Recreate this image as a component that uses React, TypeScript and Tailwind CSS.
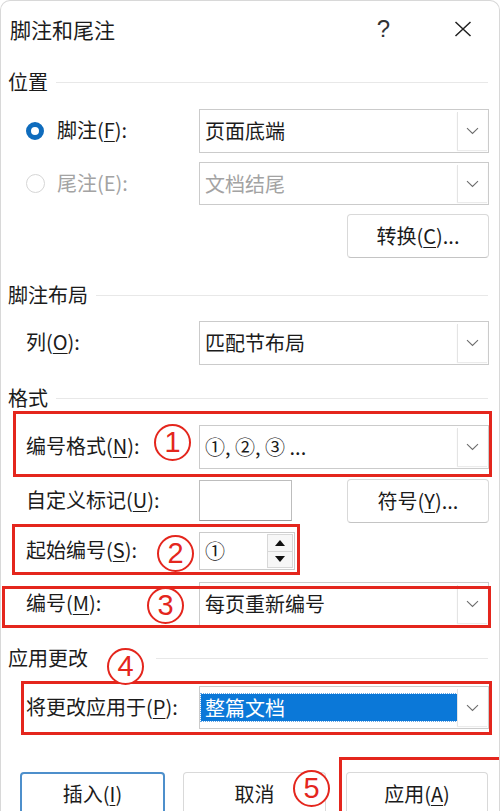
import React from 'react';

type LabelProps = { pre: string; hot: string; post?: string; muted?: boolean };

function Label({ pre, hot, post = '):', muted }: LabelProps) {
  return (
    <span className={`whitespace-nowrap text-[20px] leading-none ${muted ? 'text-[#a3a3a3]' : 'text-[#1b1b1b]'}`}>
      {pre}(<span className="underline decoration-1 underline-offset-[3px]">{hot}</span>{post}
    </span>
  );
}

function Chevron() {
  return (
    <svg width="13" height="8" viewBox="0 0 13 8" fill="none">
      <path d="M1 1.2l5.5 5.3 5.5-5.3" stroke="#6e6e6e" strokeWidth="1.1" />
    </svg>
  );
}

function Select({ value, muted, selected, h }: { value: string; muted?: boolean; selected?: boolean; h: string }) {
  return (
    <div className={`flex w-[290px] ${h} items-stretch border border-[#cbcbcb] bg-white`}>
      <div className="flex flex-1 items-center pl-[1px]">
        {selected ? (
          <span className="flex h-[27px] w-full items-center bg-[#0b78d8] pl-[4px] text-[20px] leading-none text-white outline-1 outline-dotted outline-[#6aa8e4]">
            {value}
          </span>
        ) : (
          <span className={`pl-[4px] text-[20px] leading-none ${muted ? 'text-[#a3a3a3]' : 'text-[#1b1b1b]'}`}>{value}</span>
        )}
      </div>
      <div className="my-[2px] mr-[1px] flex w-[30px] items-center justify-center border-l border-[#e4e4e4] shadow-[0_1px_1px_rgba(0,0,0,0.08)]">
        <Chevron />
      </div>
    </div>
  );
}

function Heading({ text, line = 'ml-[8px]' }: { text: string; line?: string }) {
  return (
    <div className="flex h-[28px] items-center pl-[7px] pr-[11px]">
      <span className="whitespace-nowrap text-[20px] leading-none text-[#1b1b1b]">{text}</span>
      <div className={`h-px flex-1 bg-[#e8e8e8] ${line}`} />
    </div>
  );
}

function Button({ children, width, primary }: { children: React.ReactNode; width: string; primary?: boolean }) {
  return (
    <div
      className={`flex h-[44px] ${width} items-center justify-center rounded-[4px] bg-white text-[20px] leading-none text-[#1b1b1b] ${
        primary ? 'border-2 border-[#4d8fcb]' : 'border border-[#d9d9d9] border-b-[#c4c4c4]'
      }`}
    >
      {children}
    </div>
  );
}

function Circled({ n, className }: { n: string; className: string }) {
  return (
    <div
      className={`absolute flex h-[37px] w-[37px] items-center justify-center rounded-full border-[2.5px] border-[#e4261d] bg-white font-['Liberation_Sans',sans-serif] text-[29px] leading-none text-[#e4261d] ${className}`}
    >
      <span className="-mt-[1px]">{n}</span>
    </div>
  );
}

function Radio({ checked }: { checked?: boolean }) {
  return checked ? (
    <div className="h-[18px] w-[18px] rounded-full border-[5px] border-[#0f6cbd] bg-white" />
  ) : (
    <div className="h-[19px] w-[19px] rounded-full border border-[#d6d6d6] bg-white" />
  );
}

export default function App() {
  return (
    <div className="relative h-[811px] w-[500px] overflow-hidden rounded-t-[10px] border border-b-0 border-[#d8d8d8] bg-white font-['Noto_Sans_CJK_SC',sans-serif] text-[#1b1b1b]">
      {/* title bar */}
      <div className="flex h-[56px] items-center pl-[9px]">
        <span className="flex-1 text-[21px] leading-none">脚注和尾注</span>
        <span className="mr-[64px] font-['Liberation_Sans',sans-serif] text-[24px] font-light leading-none text-[#333]">?</span>
        <svg className="mr-[27px]" width="18" height="16" viewBox="0 0 18 16">
          <path d="M1.5 1l15 14M16.5 1l-15 14" stroke="#222" strokeWidth="1.5" />
        </svg>
      </div>

      <div className="mt-[11px]">
        <Heading text="位置" />
      </div>

      <div className="mt-[13px] flex h-[44px] items-center">
        <div className="flex w-[198px] items-center pl-[25px]">
          <Radio checked />
          <span className="ml-[13px]">
            <Label pre="脚注" hot="F" />
          </span>
        </div>
        <Select value="页面底端" h="h-[44px]" />
      </div>

      <div className="mt-[9px] flex h-[43px] items-center">
        <div className="flex w-[198px] items-center pl-[25px]">
          <Radio />
          <span className="ml-[12px]">
            <span className="whitespace-nowrap text-[20px] leading-none text-[#a3a3a3]">尾注(E):</span>
          </span>
        </div>
        <Select value="文档结尾" muted h="h-[43px]" />
      </div>

      <div className="mt-[9px] flex justify-end pr-[10px]">
        <Button width="w-[142px]">
          <Label pre="转换" hot="C" post=")..." />
        </Button>
      </div>

      <div className="mt-[23px]">
        <Heading text="脚注布局" />
      </div>

      <div className="mt-[12px] flex h-[44px] items-center">
        <div className="w-[198px] pl-[25px]">
          <Label pre="列" hot="O" />
        </div>
        <Select value="匹配节布局" h="h-[44px]" />
      </div>

      <div className="mt-[19px]">
        <Heading text="格式" />
      </div>

      <div className="mt-[13px] flex h-[44px] items-center">
        <div className="w-[198px] pl-[25px]">
          <Label pre="编号格式" hot="N" />
        </div>
        <Select value="①, ②, ③ ..." h="h-[44px]" />
      </div>

      <div className="mt-[11px] flex h-[42px] items-center">
        <div className="w-[198px] pl-[25px]">
          <Label pre="自定义标记" hot="U" />
        </div>
        <div className="h-[41px] w-[93px] self-start border border-[#bdbdbd] border-b-[#9a9a9a] bg-white" />
        <div className="ml-auto mr-[10px]">
          <Button width="w-[142px]">
            <Label pre="符号" hot="Y" post=")..." />
          </Button>
        </div>
      </div>

      <div className="mt-[10px] flex h-[38px] items-center">
        <div className="w-[198px] pl-[25px]">
          <Label pre="起始编号" hot="S" />
        </div>
        <div className="flex h-[38px] w-[96px] items-stretch border border-[#cbcbcb] bg-white">
          <span className="flex flex-1 items-center pl-[5px] text-[20px] leading-none">①</span>
          <div className="my-[1px] mr-[1px] flex w-[26px] flex-col border border-[#d8d8d8]">
            <div className="flex flex-1 items-center justify-center border-b border-[#d8d8d8] bg-[#f7f7f7]">
              <svg width="10" height="6" viewBox="0 0 10 6">
                <path d="M5 0L10 6H0z" fill="#111" />
              </svg>
            </div>
            <div className="flex flex-1 items-center justify-center bg-[#f7f7f7]">
              <svg width="10" height="6" viewBox="0 0 10 6">
                <path d="M0 0h10L5 6z" fill="#111" />
              </svg>
            </div>
          </div>
        </div>
      </div>

      <div className="mt-[12px] flex h-[44px] items-center">
        <div className="w-[198px] pl-[25px]">
          <Label pre="编号" hot="M" />
        </div>
        <Select value="每页重新编号" h="h-[44px]" />
      </div>

      <div className="mt-[18px]">
        <Heading text="应用更改" line="ml-[68px]" />
      </div>

      <div className="mt-[14px] flex h-[43px] items-center">
        <div className="w-[198px] pl-[25px]">
          <Label pre="将更改应用于" hot="P" />
        </div>
        <Select value="整篇文档" selected h="h-[43px]" />
      </div>

      <div className="mt-[43px] flex items-center pl-[19px]">
        <Button width="w-[145px]" primary>
          <Label pre="插入" hot="I" post=")" />
        </Button>
        <div className="ml-[18px]">
          <Button width="w-[143px]">取消</Button>
        </div>
        <div className="ml-[20px]">
          <Button width="w-[142px]">
            <Label pre="应用" hot="A" post=")" />
          </Button>
        </div>
      </div>

      {/* annotation overlays */}
      <div className="pointer-events-none absolute left-[12px] top-[410px] h-[66px] w-[479px] border-[3px] border-[#e4261d]" />
      <div className="pointer-events-none absolute left-[11px] top-[523px] h-[51px] w-[288px] border-[3px] border-[#e4261d]" />
      <div className="pointer-events-none absolute left-[1px] top-[585px] h-[42px] w-[489px] border-[3px] border-[#e4261d]" />
      <div className="pointer-events-none absolute left-[20px] top-[680px] h-[54px] w-[471px] border-[3px] border-[#e4261d]" />
      <div className="pointer-events-none absolute left-[338px] top-[756px] h-[80px] w-[170px] border-[3px] border-[#e4261d]" />

      <Circled n="1" className="left-[153px] top-[423px]" />
      <Circled n="2" className="left-[156px] top-[534px]" />
      <Circled n="3" className="left-[146px] top-[586px]" />
      <Circled n="4" className="left-[106px] top-[647px]" />
      <Circled n="5" className="left-[292px] top-[769px]" />
    </div>
  );
}
